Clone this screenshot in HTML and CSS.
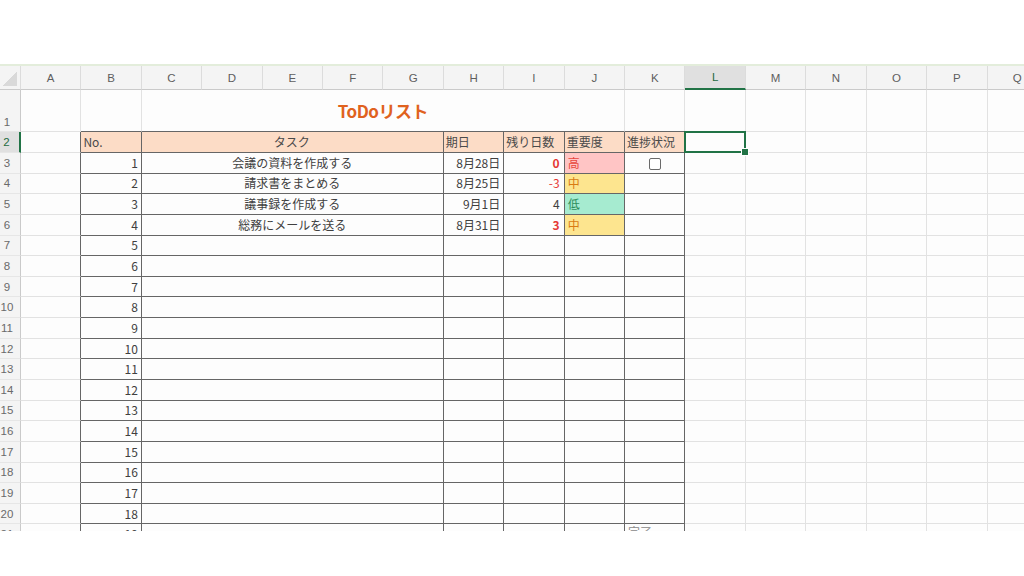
FILE: index.html
```html
<!DOCTYPE html>
<html lang="ja">
<head>
    <meta charset="UTF-8">
    <meta name="viewport" content="width=device-width, initial-scale=1.0">
    <title>ToDoリスト</title>
    <link rel="stylesheet" href="styles.css">
</head>
<body>
    <div class="top-band"></div>

    <div class="sheet">
        <table class="grid">
            <colgroup>
                <col class="c-head">
                <col span="17" class="c-cell">
            </colgroup>
            <thead>
                <tr>
                    <th class="corner"></th>
                    <th>A</th><th>B</th><th>C</th><th>D</th><th>E</th><th>F</th>
                    <th>G</th><th>H</th><th>I</th><th>J</th><th>K</th>
                    <th class="on">L</th><th>M</th><th>N</th><th>O</th><th>P</th><th>Q</th>
                </tr>
            </thead>
            <tbody id="rows">
                <tr class="r1">
                    <th>1</th>
                    <td></td>
                    <td class="edge-b"></td>
                    <td class="edge-b title" colspan="8">ToDoリスト</td>
                    <td class="edge-b"></td>
                    <td></td><td></td><td></td><td></td><td></td><td></td>
                </tr>
                <tr>
                    <th class="on">2</th>
                    <td class="edge-r"></td>
                    <td class="box head">No.</td>
                    <td class="box head center" colspan="5">タスク</td>
                    <td class="box head">期日</td>
                    <td class="box head">残り日数</td>
                    <td class="box head">重要度</td>
                    <td class="box head">進捗状況</td>
                    <td class="selected"></td>
                    <td></td><td></td><td></td><td></td><td></td>
                </tr>
            </tbody>
        </table>
    </div>

    <script>
        const tasks = [
            { task: '会議の資料を作成する', due: '8月28日', left: '0', leftCls: 'late bold', prio: '高', prioCls: 'high', check: true },
            { task: '請求書をまとめる', due: '8月25日', left: '-3', leftCls: 'late', prio: '中', prioCls: 'mid' },
            { task: '議事録を作成する', due: '9月1日', left: '4', leftCls: '', prio: '低', prioCls: 'low' },
            { task: '総務にメールを送る', due: '8月31日', left: '3', leftCls: 'late bold', prio: '中', prioCls: 'mid' }
        ];

        const body = document.getElementById('rows');
        let html = '';

        // rows 3-21, numbered 1-19
        for (let r = 3; r <= 21; r++) {
            const t = tasks[r - 3] || {};
            let status = '';
            if (t.check) status = '<span class="checkbox"></span>';
            if (r === 21) status = '<span class="done">完了</span>';

            html += '<tr>' +
                '<th>' + r + '</th>' +
                '<td class="edge-r"></td>' +
                '<td class="box num">' + (r - 2) + '</td>' +
                '<td class="box center" colspan="5">' + (t.task || '') + '</td>' +
                '<td class="box num">' + (t.due || '') + '</td>' +
                '<td class="box num days ' + (t.leftCls || '') + '">' + (t.left || '') + '</td>' +
                '<td class="box ' + (t.prioCls || '') + '">' + (t.prio || '') + '</td>' +
                '<td class="box status' + (r === 21 ? ' top' : ' center') + '">' + status + '</td>' +
                '<td></td><td></td><td></td><td></td><td></td><td></td>' +
                '</tr>';
        }

        body.insertAdjacentHTML('beforeend', html);
    </script>
</body>
</html>
```

FILE: styles.css
```css
* {
    box-sizing: border-box;
}

body {
    margin: 0;
    background-color: #fff;
    font-family: "Noto Sans CJK JP", "Noto Sans", sans-serif;
    color: #404040;
}

.top-band {
    height: 66px;
    border-bottom: 2px solid #e3eddb;
}

.sheet {
    height: 465px;
    overflow: hidden;
    background-color: #fdfdfd;
}

.grid {
    table-layout: fixed;
    width: 1048px;
    border-collapse: separate;
    border-spacing: 0;
    font-size: 12px;
}

.c-head {
    width: 21px;
}

.c-cell {
    width: 60.4px;
}

.grid td,
.grid th {
    padding: 0 3px;
    border-right: 1px solid #e2e2e2;
    border-bottom: 1px solid #e2e2e2;
    white-space: nowrap;
    overflow: hidden;
    font-weight: normal;
    line-height: 1;
    height: 20.65px;
}

/* column letters */
.grid thead th {
    height: 24px;
    background-color: #f4f4f4;
    color: #5e5e5e;
    font: 11.5px "Liberation Sans", Arial, sans-serif;
    text-align: center;
    border-right-color: #dcdcdc;
    border-bottom-color: #cacaca;
}

.grid thead th.on {
    background-color: #e0e0e0;
    color: #1f6b40;
    border-bottom: 2px solid #217346;
}

.grid thead th.corner {
    background-color: #f4f4f4;
    background-image: linear-gradient(135deg, transparent 50%, #d9d9d9 50%);
    background-repeat: no-repeat;
    background-position: right 3px bottom 3px;
    background-size: 14px 14px;
}

/* row numbers */
.grid tbody th {
    background-color: #f4f4f4;
    color: #6a6a6a;
    font: 11.5px "Liberation Sans", Arial, sans-serif;
    text-align: center;
    padding: 0 6px 0 0;
    border-right-color: #cacaca;
    border-bottom-color: #e6e6e6;
}

.grid tbody th.on {
    background-color: #e0e0e0;
    color: #1f6b40;
    border-right: 2px solid #217346;
}

.grid tr.r1 td,
.grid tr.r1 th {
    height: 42.3px;
}

.grid tr.r1 th {
    vertical-align: bottom;
    padding-bottom: 3px;
}

.grid td.title {
    font-size: 17px;
    font-weight: bold;
    color: #e0621e;
    text-align: center;
    letter-spacing: -0.5px;
}

/* table borders */
.edge-r {
    border-right-color: #666 !important;
}

.edge-b {
    border-bottom-color: #666 !important;
}

.grid td.box {
    border-right-color: #666;
    border-bottom-color: #666;
}

.head {
    background-color: #fcdcc6;
    color: #4a4a4a;
    padding-left: 2px !important;
}

.center {
    text-align: center;
}

.num {
    text-align: right;
}

.days {
    padding-right: 4px !important;
}

.late {
    color: #e53935;
}

.bold {
    font-weight: bold !important;
}

.high {
    background-color: #ffc5c5;
    color: #e8463c;
}

.mid {
    background-color: #fde58f;
    color: #d97c12;
}

.low {
    background-color: #a6ebd0;
    color: #2f8f5e;
}

.checkbox {
    display: inline-block;
    width: 12px;
    height: 12px;
    border: 1.5px solid #6a6a6a;
    border-radius: 2px;
    background-color: #fff;
    vertical-align: -4px;
}

.status.top {
    vertical-align: top;
    padding-top: 2px;
}

.done {
    color: #8a8a8a;
}

/* active cell */
.grid td.selected {
    position: relative;
    overflow: visible;
}

.selected::after {
    content: "";
    position: absolute;
    left: -1px;
    top: -1px;
    right: -1px;
    bottom: -1px;
    border: 2px solid #217346;
}

.selected::before {
    content: "";
    position: absolute;
    right: -4px;
    bottom: -4px;
    width: 6px;
    height: 6px;
    background-color: #217346;
    border: 1px solid #fff;
    z-index: 1;
}
```
